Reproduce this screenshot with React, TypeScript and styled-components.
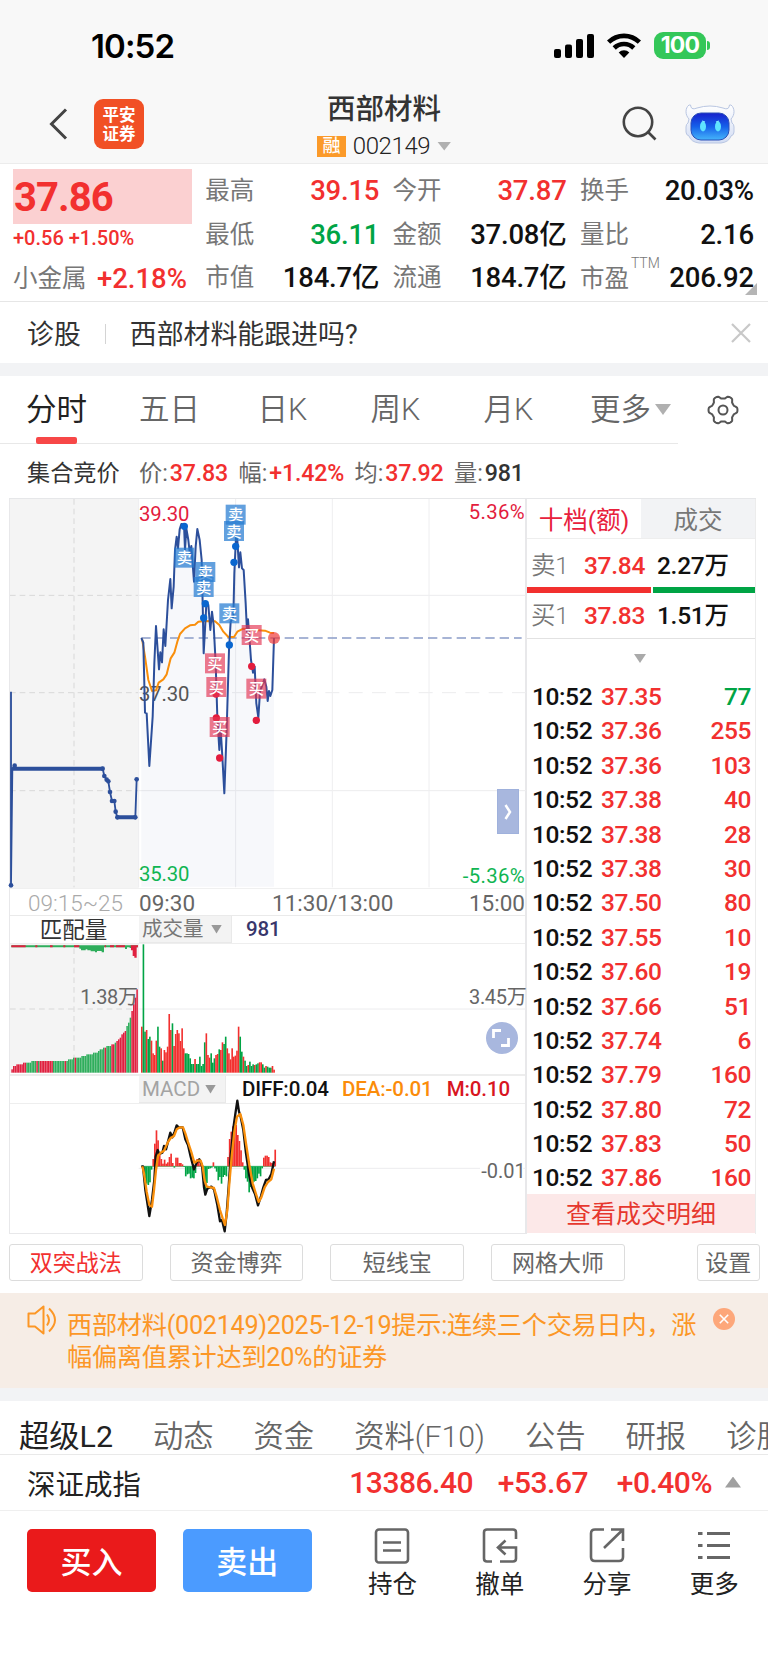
import * as React from 'react';
import styled, { createGlobalStyle } from 'styled-components';

const RED = '#f2302f';
const GREEN = '#00a445';
const INK = '#111';

const GlobalStyle = createGlobalStyle`
  * {
    box-sizing: border-box;
  }
  body {
    margin: 0;
    background: #fff;
    font-family: Roboto, "Noto Sans CJK SC", sans-serif;
    color: ${INK};
  }
`;

const Page = styled.div`
  width: 768px;
  height: 1662px;
  overflow: hidden;
  background: #fff;
`;

const Top = styled.div`
  background: #f8f8f8;
  border-bottom: 1px solid #ececec;
`;

const StatusBar = styled.div`
  height: 91px;
  padding: 0 58px 0 91px;
  display: flex;
  align-items: center;
  justify-content: space-between;
`;

const Clock = styled.div`
  font: 600 33px/40px Inter, sans-serif;
  letter-spacing: -0.9px;
  color: #000;
`;

const StatusIcons = styled.div`
  display: flex;
  align-items: center;
  gap: 13px;
`;

const Battery = styled.div`
  width: 52px;
  height: 27px;
  border-radius: 9px;
  background: #34c759;
  color: #fff;
  font: 700 23px/27px Inter, sans-serif;
  letter-spacing: -0.8px;
  text-align: center;
`;

const BatteryWrap = styled.div`
  display: flex;
  align-items: center;
  gap: 1px;
  &::after {
    content: '';
    width: 3px;
    height: 9px;
    border-radius: 0 3px 3px 0;
    background: #34c759;
  }
`;

const NavBar = styled.header`
  height: 72px;
  padding: 0 33px 6px 48px;
  display: grid;
  grid-template-columns: 96px 1fr 114px;
  align-items: center;
`;

const NavLeft = styled.div`
  display: flex;
  align-items: center;
  justify-content: space-between;
  margin-bottom: 8px;
`;

const NavRight = styled(NavLeft)``;

const Logo = styled.div`
  width: 50px;
  height: 50px;
  border-radius: 9px;
  background: #f15025;
  color: #fff;
  font-size: 16.5px;
  line-height: 19px;
  font-weight: 700;
  text-align: center;
  padding: 7px 6px 0;
`;

const Title = styled.h1`
  margin: 0;
  font-size: 28.5px;
  line-height: 36px;
  font-weight: 500;
  color: #333;
`;

const TitleBox = styled.div`
  display: flex;
  flex-direction: column;
  align-items: center;
  margin-top: 1px;
  padding-left: 3px;
`;

const CodeRow = styled.div`
  display: flex;
  align-items: center;
  height: 36px;
  gap: 7px;
  font-size: 24px;
  font-weight: 300;
  letter-spacing: -0.4px;
  color: #222;
`;

const Badge = styled.span`
  width: 29px;
  height: 21px;
  background: #fb9a2a;
  color: #fff;
  font-size: 18px;
  line-height: 20px;
  font-weight: 500;
  text-align: center;
`;

const Caret = styled.i<{ w?: number; h?: number; up?: boolean; tone?: string }>`
  display: inline-block;
  width: ${p => p.w || 14}px;
  height: ${p => p.h || 9}px;
  background: ${p => p.tone || '#b0b0b0'};
  clip-path: ${p => (p.up ? 'polygon(50% 0, 100% 100%, 0 100%)' : 'polygon(0 0, 100% 0, 50% 100%)')};
`;

const IndexCaret = styled(Caret)`
  margin-left: 13px;
`;

const Quote = styled.section`
  position: relative;
  height: 138px;
  padding: 5px 14px 0 13px;
  display: grid;
  grid-template-columns: 179px 174px 174px 174px;
  column-gap: 13.3px;
  border-bottom: 1px solid #e6e6e6;
`;

const PriceBox = styled.div`
  height: 55px;
  background: #fbd0d1;
  color: ${RED};
  font-size: 40px;
  font-weight: 700;
  line-height: 58px;
  padding-left: 1px;
  letter-spacing: -0.9px;
`;

const Change = styled.div`
  color: ${RED};
  height: 30px;
  line-height: 29px;
  font-size: 20px;
  font-weight: 500;
  letter-spacing: 0;
`;

const Sector = styled.div`
  height: 48px;
  line-height: 50px;
  display: flex;
  justify-content: space-between;
  padding-right: 5px;
  font-size: 24.5px;
  color: #777;
  b {
    font-size: 27.5px;
    font-weight: 500;
    color: ${RED};
  }
`;

const StatRow = styled.div`
  display: flex;
  justify-content: space-between;
  height: 43.5px;
  line-height: 44px;
  font-size: 24.5px;
  color: #777;
`;

const StatValue = styled.span<{ tone?: string }>`
  font-size: 27.5px;
  font-weight: 500;
  letter-spacing: -0.2px;
  color: ${p => p.tone || INK};
`;

const Sup = styled.sup`
  font-size: 14px;
  line-height: 14px;
  vertical-align: 19px;
  font-weight: 300;
  margin-left: 2px;
`;

const Corner = styled.i`
  position: absolute;
  right: 11px;
  bottom: 6px;
  width: 12px;
  height: 12px;
  background: #b5b5b5;
  clip-path: polygon(100% 0, 100% 100%, 0 100%);
`;

const AskRow = styled.div`
  height: 61px;
  display: flex;
  align-items: center;
  padding: 0 17px 0 27px;
  font-size: 26.9px;
  color: #333;
`;

const AskDivider = styled.i`
  width: 1px;
  height: 20px;
  margin: 3px 24px 0 24px;
  background: #d4d4d4;
`;

const Band = styled.div`
  height: 13px;
  background: #f2f3f5;
`;

const PeriodBar = styled.nav`
  display: flex;
  height: 68px;
`;

const Periods = styled.div`
  display: flex;
  width: 678px;
  border-bottom: 1px solid #e8e8e8;
`;

const Period = styled.div<{ active?: boolean }>`
  position: relative;
  width: 113px;
  height: 67px;
  line-height: 67px;
  text-align: center;
  font-size: 30.5px;
  font-weight: ${p => (p.active ? 400 : 350)};
  color: ${p => (p.active ? '#222' : '#666')};
  &::after {
    content: '';
    display: ${p => (p.active ? 'block' : 'none')};
    position: absolute;
    left: 36px;
    bottom: -1px;
    width: 41px;
    height: 7px;
    border-radius: 2px;
    background: #f74747;
  }
`;

const MorePeriod = styled(Period)`
  white-space: nowrap;
  display: flex;
  align-items: center;
  justify-content: flex-end;
  gap: 4px;
  padding-right: 7px;
`;

const GearCell = styled.div`
  flex: 1;
  display: flex;
  align-items: center;
  justify-content: center;
`;

const InfoRow = styled.div`
  height: 54px;
  display: flex;
  align-items: center;
  padding-left: 27px;
  font-size: 23.2px;
  color: #666;
`;

const InfoTitle = styled.span`
  width: 112px;
  color: #333;
`;

const InfoItem = styled.span<{ tone?: string }>`
  margin-right: 10.5px;
  b {
    margin-left: 2px;
    font-weight: 500;
    letter-spacing: -0.2px;
    color: ${p => p.tone || RED};
  }
`;

const Market = styled.main`
  display: flex;
  margin: 0 12px 0 9px;
  height: 736px;
  border-top: 1px solid #e6e7e9;
`;

const Charts = styled.div`
  position: relative;
  width: 518px;
  border: solid #e8e8ea;
  border-width: 0 2px 1px 1px;
  svg {
    display: block;
    margin-left: -1px;
    overflow: visible;
  }
`;

const TimeAxis = styled.div`
  display: flex;
  align-items: center;
  height: 28px;
  padding-top: 1px;
  border-bottom: 1px solid #eaeaea;
  border-top: 1px solid #f0f0f0;
  font-size: 22.5px;
  color: #666;
  letter-spacing: 0;
  span:nth-child(1) {
    width: 129px;
    padding-left: 18px;
    color: #aaa;
    font-weight: 300;
  }
  span:nth-child(2) {
    width: 133px;
  }
  span:nth-child(3) {
    flex: 1;
  }
`;

const PaneHead = styled.div`
  display: flex;
  height: 28px;
  line-height: 27px;
  border-bottom: 1px solid #eee;
  font-size: 20.5px;
  font-weight: 500;
`;

const PaneName = styled.div`
  width: 129px;
  text-align: center;
  padding-right: 2px;
  font-size: 22.5px;
  line-height: 29px;
  font-weight: 400;
  color: #333;
`;

const Indicator = styled.div<{ w: number; tone: string }>`
  width: ${p => p.w}px;
  height: 27px;
  padding: 0 9px 0 3px;
  display: flex;
  align-items: center;
  justify-content: space-between;
  background: #f3f3f3;
  border: solid #e9e9e9;
  border-width: 0 1px 1px 0;
  font-weight: 400;
  color: ${p => p.tone};
`;

const Reading = styled.span<{ tone: string; gap: number }>`
  margin-left: ${p => p.gap}px;
  letter-spacing: -0.1px;
  color: ${p => p.tone};
`;

const PaneGap = styled.div`
  height: 2px;
  background: #ededed;
`;

const Expand = styled.button`
  position: absolute;
  right: 6px;
  top: 290px;
  width: 22px;
  height: 45px;
  border: 1px solid #9fb1dc;
  padding: 0 0 0 7px;
  background: #a8b7de;
`;

const Fullscreen = styled.button`
  position: absolute;
  right: 7px;
  top: 523px;
  width: 32px;
  height: 32px;
  border: 0;
  border-radius: 50%;
  padding: 7px;
  background: #a8b7de;
`;

const Book = styled.aside`
  flex: 1;
  border-right: 1px solid #ececec;
`;

const BookTabs = styled.div`
  display: flex;
  height: 40px;
  border-bottom: 1px solid #eee;
`;

const BookTab = styled.div<{ active?: boolean }>`
  flex: 1;
  text-align: center;
  font-size: 24.5px;
  line-height: 44px;
  color: ${p => (p.active ? '#e8213c' : '#777')};
  background: ${p => (p.active ? '#fff' : '#f2f3f5')};
`;

const Level = styled.div<{ lh: number }>`
  display: flex;
  height: 48px;
  line-height: ${p => p.lh}px;
  padding-left: 4px;
  font-size: 24.5px;
  font-weight: 500;
  letter-spacing: -0.3px;
  color: #777;
  span:nth-child(1) {
    width: 53px;
    font-weight: 350;
  }
  span:nth-child(2) {
    width: 73px;
    color: ${RED};
  }
  span:nth-child(3) {
    color: ${INK};
  }
`;

const Ratio = styled.div`
  display: flex;
  gap: 2px;
  height: 6px;
`;

const RatioPart = styled.i<{ tone: string }>`
  height: 6px;
  background: ${p => p.tone};
`;

const BookMore = styled.div`
  height: 42px;
  border-top: 1px solid #e2e2e2;
  padding-left: 107px;
  line-height: 37px;
  margin-top: -3px;
`;

const Tick = styled.div`
  display: flex;
  height: 34.4px;
  line-height: 34.4px;
  padding: 0 4px 0 5px;
  font-size: 24.5px;
  font-weight: 500;
  letter-spacing: -0.4px;
  span:nth-child(1) {
    width: 69px;
  }
  span:nth-child(2) {
    flex: 1;
    color: ${RED};
  }
`;

const TickVolume = styled.span<{ down?: boolean }>`
  color: ${p => (p.down ? GREEN : RED)};
`;

const Detail = styled.div`
  height: 39px;
  margin-top: -2px;
  line-height: 42px;
  text-align: center;
  font-size: 25px;
  color: #e6382f;
  background: #fce8e8;
`;

const Tools = styled.div`
  display: flex;
  height: 59px;
  padding: 10px 8.5px 0 9px;
  gap: 27px;
`;

const Tool = styled.div<{ active?: boolean; small?: boolean }>`
  width: ${p => (p.small ? 62.5 : 133.7)}px;
  height: 37px;
  margin-left: ${p => (p.small ? 'auto' : 0)};
  border: 1px solid #dcdcdc;
  border-radius: 3px;
  text-align: center;
  font-size: 23px;
  line-height: 37px;
  color: ${p => (p.active ? RED : '#666')};
`;

const Notice = styled.div`
  display: flex;
  height: 95px;
  padding: 12px 33px 0 27px;
  background: #f6ede6;
  color: #fc9726;
  font-size: 25.2px;
  line-height: 31.5px;
  svg {
    flex: none;
  }
`;

const NoticeText = styled.p`
  flex: 1;
  margin: 5px 0 0 10px;
  white-space: nowrap;
  letter-spacing: -0.27px;
`;

const NoticeClose = styled.svg`
  margin-top: 3px;
`;

const NewsTabs = styled.nav`
  display: flex;
  gap: 40px;
  height: 54px;
  padding-left: 19px;
  border-bottom: 1px solid #e9e9e9;
  white-space: nowrap;
  overflow: hidden;
`;

const NewsTab = styled.span<{ active?: boolean }>`
  font-size: 30.3px;
  line-height: 72px;
  height: 53px;
  font-weight: ${p => (p.active ? 400 : 350)};
  color: ${p => (p.active ? '#222' : '#666')};
`;

const IndexRow = styled.div`
  display: flex;
  align-items: center;
  height: 56px;
  padding: 0 27px 1px 27px;
  border-bottom: 1px solid #efefef;
  font-size: 28.5px;
  color: #222;
`;

const IndexValue = styled.span<{ w: number }>`
  width: ${p => p.w}px;
  text-align: right;
  font-size: 30px;
  font-weight: 500;
  letter-spacing: -0.5px;
  color: ${RED};
`;

const Spacer = styled.div`
  flex: 1;
`;

const BottomBar = styled.footer`
  display: flex;
  padding: 18px 0 0 27px;
`;

const Trade = styled.button<{ tone: string }>`
  width: 129px;
  height: 63px;
  margin-right: 27px;
  border: 0;
  border-radius: 5px;
  background: ${p => p.tone};
  color: #fff;
  font: 500 31px/67px Roboto, 'Noto Sans CJK SC', sans-serif;
  padding: 0;
`;

const Action = styled.div`
  width: 107.4px;
  display: flex;
  flex-direction: column;
  align-items: center;
  font-size: 24.5px;
  line-height: 36px;
  color: #222;
  svg {
    display: block;
    margin: -2px 0 2px;
  }
`;

type Stat = [string, string, string?];

const stats: Stat[][] = [
  [['最高', '39.15', RED], ['最低', '36.11', GREEN], ['市值', '184.7亿']],
  [['今开', '37.87', RED], ['金额', '37.08亿'], ['流通', '184.7亿']],
  [['换手', '20.03%'], ['量比', '2.16'], ['市盈', '206.92']]
];

const ticks: [string, number][] = [
  ['37.35', -77],
  ['37.36', 255],
  ['37.36', 103],
  ['37.38', 40],
  ['37.38', 28],
  ['37.38', 30],
  ['37.50', 80],
  ['37.55', 10],
  ['37.60', 19],
  ['37.66', 51],
  ['37.74', 6],
  ['37.79', 160],
  ['37.80', 72],
  ['37.83', 50],
  ['37.86', 160]
];

// chart geometry is kept in 3x units
const priceLine =
  '424,444 430,458 432,540 435,668 440,670 448,828 458,680 463,520 468,408 477,538 481,487 486,517 491,418 496,468 504,330 511,267 515,355 521,290 525,180 530,140 534,175 539,118 544,102 552,104 555,180 559,115 565,150 570,195 574,168 582,275 587,170 592,117 599,150 605,210 608,340 611,490 616,400 619,342 625,345 631,420 636,365 641,405 647,520 652,680 658,780 661,700 667,800 673,910 680,720 687,480 692,395 700,380 703,250 708,140 712,150 717,232 721,187 726,235 731,240 737,340 741,425 744,388 748,440 753,510 759,548 764,530 769,640 775,683 780,605 793,568 799,590 803,633 807,603 811,618 817,600 822,444';

const averageLine =
  '426,446 435,500 445,570 456,603 468,601 476,578 490,568 500,553 512,505 523,488 532,455 540,432 555,415 570,406 585,404 595,395 615,393 645,394 658,405 670,425 685,441 702,441 712,425 730,416 760,420 795,422 810,428 822,429';

const sellTags = [[707, 74], [702, 123], [553, 203], [616, 246], [611, 291], [688, 370]];
const buyTags = [[645, 520], [649, 591], [659, 711], [755, 435], [769, 596]];
const sellDots = [[553, 109], [707, 169], [702, 217], [616, 341], [611, 384], [688, 465]];
const buyDots = [[648, 612], [649, 684], [659, 804], [755, 529], [769, 691]];
const auctionDots = [
  [33, 1186], [44, 827], [308, 836], [313, 858], [320, 869], [325, 874], [330, 906],
  [336, 933], [343, 933], [347, 965], [352, 982], [406, 982], [410, 868]
];

// one bar per minute, negative = falling
const minuteVolume = [
  138, -385, -123, 128, -101, -108, 96, 58, 53, 96, -138, -78, 73, -36, 68, 61, 78, 176, 128, -148,
  80, 116, 128, 118, 95, 133, 73, -58, -58, -56, -43, -26, -26, 41, -26, -26, -48, -20, -26, -91,
  118, 53, 45, -58, -30, -43, 53, 56, -70, 68, 91, -86, -108, 73, 58, 40, 73, 48, 51, 66,
  138, -108, -63, 48, -36, -20, 23, -33, -20, -25, 23, -25, -28, 31, 31, -25, -15, 20, -18, -15,
  -15, 20, 9
];

const macdBars = [
  -2, -12, -36, -52, -56, -48, -10, 22, 68, 108, 78, 42, 22, 8, 20, 8, 12, 28, 38, 10,
  -4, 26, 26, 10, 10, 6, -2, -30, -24, -22, -36, -34, -36, -20, 22, 14, 6, -2, -30, -72,
  -50, -8, -6, -4, 12, -6, -16, -42, -32, -52, -32, -26, -30, 28, 82, 104, 120, 118, 124, 94,
  76, 48, 12, -10, -36, -46, -78, -62, -50, -46, -44, -36, -22, -30, -6, 26, 32, 32, 28, 12,
  10, 12, 50
];

const matchShape: [number, number][] = [
  [34, 8], [40, 20], [60, 26], [80, 31], [120, 36], [200, 37], [210, 42], [235, 44],
  [260, 54], [290, 60], [300, 70], [345, 88], [375, 128], [390, 168], [396, 190], [404, 225], [413, 268]
];

const matchRed = [[34, 77], [108, 110], [120, 157], [192, 194], [222, 226], [314, 318], [332, 342], [348, 375], [392, 414]];

function matchHeight(x: number) {
  for (let i = 1; i < matchShape.length; i++) {
    const [x0, h0] = matchShape[i - 1];
    const [x1, h1] = matchShape[i];
    if (x <= x1) {
      return h0 + ((x - x0) / (x1 - x0)) * (h1 - h0);
    }
  }
  return 268;
}

function Grid({ ys, dashY }: { ys: number[]; dashY?: number }) {
  return (
    <g stroke="#ececee" strokeWidth="3">
      {ys.map(y => (
        <line key={y} x1="416" x2="1578" y1={y} y2={y} />
      ))}
      {dashY && (
        <line x1="416" x2="1578" y1={dashY} y2={dashY} strokeDasharray="42 28" />
      )}
    </g>
  );
}

function Tags({ points, text, color }: { points: number[][]; text: string; color: string }) {
  return (
    <g>
      {points.map(([x, y]) => (
        <g key={`${x}-${y}`}>
          <rect x={x - 30} y={y - 30} width="60" height="60" fill={color} />
          <text x={x} y={y + 17} fontSize="46" fontWeight="500" fill="#fff" textAnchor="middle">
            {text}
          </text>
        </g>
      ))}
    </g>
  );
}

function Dots({ points, color, r }: { points: number[][]; color: string; r: number }) {
  return (
    <g fill={color}>
      {points.map(([x, y]) => (
        <circle key={`${x}-${y}`} cx={x} cy={y} r={r} />
      ))}
    </g>
  );
}

function PriceChart() {
  return (
    <svg width="518" height="389" viewBox="27 27 1554 1167">
      <rect x="30" y="27" width="386" height="1167" fill="#f4f4f4" />
      <g stroke="#d8d8d8" strokeWidth="3" strokeDasharray="17 12">
        <line x1="222" x2="222" y1="27" y2="1192" />
        <line x1="30" x2="416" y1="316" y2="316" />
        <line x1="30" x2="416" y1="608" y2="608" />
        <line x1="30" x2="416" y1="902" y2="902" />
      </g>
      <Grid ys={[316, 902]} dashY={608} />
      <g stroke="#eeeef0" strokeWidth="3">
        <line x1="416" x2="416" y1="27" y2="1192" />
        <line x1="707" x2="707" y1="27" y2="1192" />
        <line x1="997" x2="997" y1="27" y2="1192" />
        <line x1="1287" x2="1287" y1="27" y2="1192" />
      </g>
      <polygon points={`424,1190 ${priceLine} 822,1190`} fill="#4c6cb4" fillOpacity="0.048" />
      <line x1="424" x2="1565" y1="444" y2="444" stroke="#8b9cc8" strokeWidth="5" strokeDasharray="28 15" />
      <g fontSize="61" letterSpacing="-0.5">
        <text x="417" y="94" fill="#e31c3d">39.30</text>
        <text x="417" y="633" fill="#555">37.30</text>
        <text x="417" y="1173" fill="#10b552">35.30</text>
        <text x="1575" y="88" fill="#e31c3d" textAnchor="end" letterSpacing="1">5.36%</text>
        <text x="1575" y="1179" fill="#10b552" textAnchor="end" letterSpacing="1">-5.36%</text>
      </g>
      <g fill="none" stroke="#2c4f9b" strokeLinejoin="round">
        <polyline
          points="33,605 33,1186 37,836 44,827 48,836 308,836 313,858 320,869 325,874 330,906 336,933 343,933 347,965 352,982 406,982 410,868"
          strokeWidth="5.500"
        />
        <path d="M38 836H310M350 982H408" strokeWidth="12" />
        <polyline points={averageLine} stroke="#f98f0c" strokeWidth="6" />
        <polyline points={priceLine} strokeWidth="6" />
      </g>
      <Dots points={auctionDots} color="#2c4f9b" r={7} />
      <Dots points={buyDots} color="#e31c3d" r={11} />
      <Dots points={sellDots} color="#0a66cf" r={11} />
      <Tags points={sellTags} text="卖" color="rgba(38,124,209,.72)" />
      <Tags points={buyTags} text="买" color="rgba(228,52,82,.66)" />
      <circle cx="822" cy="444" r="18" fill="#f03a3a" fillOpacity="0.7" />
    </svg>
  );
}

function VolumeChart() {
  const match: number[] = [];
  for (let x = 34; x < 413; x += 5) {
    match.push(x);
  }
  return (
    <svg width="518" height="130" viewBox="27 162 1554 390">
      <rect x="30" y="162" width="386" height="387" fill="#f4f4f4" />
      <g stroke="#d8d8d8" strokeWidth="3" strokeDasharray="17 12">
        <line x1="222" x2="222" y1="175" y2="548" />
        <line x1="30" x2="416" y1="357" y2="357" />
      </g>
      <line x1="416" x2="416" y1="162" y2="548" stroke="#eee" strokeWidth="3" />
      <Grid ys={[357]} />
      {match.map(x => {
        const h = Math.round(matchHeight(x) / 5) * 5;
        const red = matchRed.some(([a, b]) => x >= a - 2 && x <= b);
        return <rect key={x} x={x} y={548 - h} width="4.6" height={h} fill={red ? '#e0203f' : '#2fae5c'} />;
      })}
      <text x="241" y="342" fontSize="60" letterSpacing="-1" fill="#666">1.38万</text>
      <text x="1579" y="342" fontSize="60" letterSpacing="-1" fill="#666" textAnchor="end">3.45万</text>
      <path d="M34 169H414" stroke="#2fae5c" strokeWidth="6" />
      <path
        d="M34 169H77M106 169H112M150 169H158M190 169H196M222 169H238M314 169H318M330 169H342M348 169H375M392 169H414"
        stroke="#e0203f"
        strokeWidth="6"
      />
      <path d="M238 170V176H243V181H257V178H262V181H272V184H285V187H291V183H305V187H312V170Z" fill="#2fae5c" />
      <path d="M375 170V177H381V170ZM389 170V174H394V170Z" fill="#2fae5c" />
      <path d="M393 170V181H398V198H403V203H410V170Z" fill="#e0203f" />
      {minuteVolume.map((v, i) => (
        <rect
          key={i}
          x={423 + i * 4.84}
          y={548 - Math.abs(v)}
          width="4.84"
          height={Math.abs(v)}
          fill={v > 0 ? RED : GREEN}
        />
      ))}
    </svg>
  );
}

function MacdChart() {
  return (
    <svg width="518" height="128" viewBox="27 642 1554 384">
      <Grid ys={[835]} />
      <path d="M424 829H826" stroke="#00a445" strokeWidth="2" />
      {macdBars.map((v, i) => (
        <rect
          key={i}
          x={423 + i * 4.88}
          y={v > 0 ? 829 - v : 829}
          width="5"
          height={Math.abs(v)}
          fill={v > 0 ? RED : GREEN}
        />
      ))}
      <rect x="1440" y="820" width="130" height="30" fill="#fff" />
      <text x="1577" y="864" fontSize="60" fill="#666" textAnchor="end">-0.01</text>
      <g fill="none" strokeWidth="7" strokeLinejoin="round">
        <polyline
          stroke="#111"
          points="424,829 429,829 436,900 443,945 448,978 456,930 463,870 467,800 473,780 478,792 487,788 492,768 498,778 511,728 517,742 524,725 530,706 536,712 548,712 556,748 564,765 572,800 582,838 590,818 598,808 606,826 612,892 616,914 622,896 634,890 642,898 652,945 660,994 666,990 674,1024 680,970 686,890 692,800 700,715 707,665 712,632 717,665 722,680 730,720 738,790 748,858 756,892 765,912 774,946 783,918 790,892 798,870 806,868 814,852 822,814"
        />
        <polyline
          stroke="#f98f0c"
          points="427,829 432,850 440,905 448,945 456,950 462,900 468,840 474,798 482,788 492,782 504,756 512,744 522,738 530,718 540,712 549,712 556,730 564,756 574,786 583,818 592,812 602,812 608,830 614,872 620,890 632,892 642,894 650,920 660,960 668,985 675,1005 682,960 688,880 695,800 703,725 711,680 721,672 730,705 738,760 748,825 758,880 768,912 776,936 784,922 794,892 804,876 814,868 822,836"
        />
      </g>
    </svg>
  );
}

function SignalIcon() {
  return (
    <svg width="40" height="24" viewBox="0 0 40 24" fill="#000">
      <rect x="0" y="15" width="7" height="9" rx="2" />
      <rect x="11" y="10.500" width="7" height="13.500" rx="2" />
      <rect x="22" y="5" width="7" height="19" rx="2" />
      <rect x="33" y="0" width="7" height="24" rx="2" />
    </svg>
  );
}

function WifiIcon() {
  return (
    <svg width="34" height="25" viewBox="0 0 34 25">
      <g fill="none" stroke="#000" strokeWidth="4.600">
        <path d="M1.600 9.200a22 22 0 0 1 30.800 0" />
        <path d="M7.200 15a14 14 0 0 1 19.600 0" />
      </g>
      <path d="M17 25l-5.300-5.500a7.500 7.500 0 0 1 10.600 0z" />
    </svg>
  );
}

function RobotIcon() {
  return (
    <svg width="50" height="40" viewBox="0 0 50 40">
      <defs>
        <linearGradient id="face" x1="0" y1="0" x2="0" y2="1">
          <stop offset="0" stopColor="#1720cc" />
          <stop offset="0.500" stopColor="#1560ea" />
          <stop offset="1" stopColor="#45b5fa" />
        </linearGradient>
        <linearGradient id="shell" x1="0" y1="0" x2="0" y2="1">
          <stop offset="0" stopColor="#fff" />
          <stop offset="1" stopColor="#d3ddf4" />
        </linearGradient>
      </defs>
      <path
        d="M4 1C0 4 0 11 4 15L3 19Q1 20 1 23V28Q1 31 4 32Q6 38 14 39H36Q44 38 46 32Q49 31 49 28V23Q49 20 47 19L46 15C50 11 50 4 46 1Q44 0 44 3Q43 6 38 4Q25 0 12 4Q7 6 6 3Q6 0 4 1Z"
        fill="url(#shell)"
        stroke="#b9c6e2"
        strokeWidth="1"
      />
      <rect x="6" y="9" width="38" height="27" rx="10" fill="url(#face)" stroke="#2a4fb8" strokeWidth="1" />
      <g fill="#5fe3ff">
        <ellipse cx="18" cy="22.500" rx="3" ry="5" />
        <ellipse cx="33" cy="22.500" rx="3" ry="5" />
      </g>
      <path d="M17 17l3 1M34 17l-3 1" stroke="#7fe9ff" strokeWidth="1.300" />
    </svg>
  );
}

// six-tooth gear outline
const gearPoints = Array.from({ length: 72 }, (_, i) => {
  const a = (i * Math.PI) / 36;
  const r = 13 + 1.5 * Math.tanh(2.2 * Math.cos(6 * a));
  return `${(16 + r * Math.cos(a)).toFixed(2)},${(16 + r * Math.sin(a)).toFixed(2)}`;
}).join(' ');

function GearIcon() {
  return (
    <svg width="32" height="32" viewBox="0 0 32 32" fill="none" stroke="#555" strokeWidth="2" strokeLinejoin="round">
      <polygon points={gearPoints} />
      <circle cx="16" cy="16" r="4.500" />
    </svg>
  );
}

function App() {
  return (
    <Page>
      <GlobalStyle />
      <Top>
        <StatusBar>
          <Clock>10:52</Clock>
          <StatusIcons>
            <SignalIcon />
            <WifiIcon />
            <BatteryWrap>
              <Battery>100</Battery>
            </BatteryWrap>
          </StatusIcons>
        </StatusBar>
        <NavBar>
          <NavLeft>
            <svg width="20" height="32" viewBox="0 0 20 32" fill="none" stroke="#444" strokeWidth="3">
              <path d="M18 1.500L3.500 16L18 30.500" />
            </svg>
            <Logo>平安证券</Logo>
          </NavLeft>
          <TitleBox>
            <Title>西部材料</Title>
            <CodeRow>
              <Badge>融</Badge>
              002149
              <Caret />
            </CodeRow>
          </TitleBox>
          <NavRight>
            <svg width="36" height="36" viewBox="0 0 36 36" fill="none" stroke="#444" strokeWidth="2.600">
              <circle cx="17" cy="16" r="14.200" />
              <path d="M27 26L34.500 33.500" />
            </svg>
            <RobotIcon />
          </NavRight>
        </NavBar>
      </Top>

      <Quote>
        <div>
          <PriceBox>37.86</PriceBox>
          <Change>+0.56 +1.50%</Change>
          <Sector>
            小金属<b>+2.18%</b>
          </Sector>
        </div>
        {stats.map((column, i) => (
          <div key={i}>
            {column.map(([label, value, tone]) => (
              <StatRow key={label}>
                <span>
                  {label}
                  {label === '市盈' && <Sup>TTM</Sup>}
                </span>
                <StatValue tone={tone}>{value}</StatValue>
              </StatRow>
            ))}
          </div>
        ))}
        <Corner />
      </Quote>

      <AskRow>
        诊股
        <AskDivider />
        西部材料能跟进吗?
        <Spacer />
        <svg width="20" height="20" viewBox="0 0 20 20" stroke="#c8c8c8" strokeWidth="2.200">
          <path d="M1 1L19 19M19 1L1 19" />
        </svg>
      </AskRow>
      <Band />

      <PeriodBar>
        <Periods>
          <Period active>分时</Period>
          <Period>五日</Period>
          <Period>日K</Period>
          <Period>周K</Period>
          <Period>月K</Period>
          <MorePeriod>
            更多
            <Caret w={16} h={11} />
          </MorePeriod>
        </Periods>
        <GearCell>
          <GearIcon />
        </GearCell>
      </PeriodBar>

      <InfoRow>
        <InfoTitle>集合竞价</InfoTitle>
        <InfoItem>价:<b>37.83</b></InfoItem>
        <InfoItem>幅:<b>+1.42%</b></InfoItem>
        <InfoItem>均:<b>37.92</b></InfoItem>
        <InfoItem tone="#333">量:<b>981</b></InfoItem>
      </InfoRow>

      <Market>
        <Charts>
          <PriceChart />
          <TimeAxis>
            <span>09:15~25</span>
            <span>09:30</span>
            <span>11:30/13:00</span>
            <span>15:00</span>
          </TimeAxis>
          <PaneHead>
            <PaneName>匹配量</PaneName>
            <Indicator w={93} tone="#777">
              成交量
              <Caret w={11} tone="#999" />
            </Indicator>
            <Reading gap={14} tone="#38366b">981</Reading>
          </PaneHead>
          <VolumeChart />
          <PaneGap />
          <PaneHead>
            <PaneName />
            <Indicator w={87} tone="#a3a3a3">
              MACD
              <Caret w={11} tone="#999" />
            </Indicator>
            <Reading gap={16} tone="#111">DIFF:0.04</Reading>
            <Reading gap={13} tone="#fb8c0a">DEA:-0.01</Reading>
            <Reading gap={14} tone="#d8161f">M:0.10</Reading>
          </PaneHead>
          <MacdChart />
          <Expand>
            <svg width="8" height="16" viewBox="0 0 8 16" fill="none" stroke="#fff" strokeWidth="2.500">
              <path d="M1.500 1L6 8L1.500 15" />
            </svg>
          </Expand>
          <Fullscreen>
            <svg width="18" height="18" viewBox="0 0 18 18" fill="none" stroke="#fff" strokeWidth="2.800">
              <path d="M1.500 9V1.500H9M9 16.500H16.500V9" />
            </svg>
          </Fullscreen>
        </Charts>
        <Book>
          <BookTabs>
            <BookTab active>十档(额)</BookTab>
            <BookTab>成交</BookTab>
          </BookTabs>
          <Level lh={53}>
            <span>卖1</span>
            <span>37.84</span>
            <span>2.27万</span>
          </Level>
          <Ratio>
            <RatioPart tone={RED} style={{ width: '55%' }} />
            <RatioPart tone={GREEN} style={{ width: '45%' }} />
          </Ratio>
          <Level lh={46}>
            <span>买1</span>
            <span>37.83</span>
            <span>1.51万</span>
          </Level>
          <BookMore>
            <Caret w={12} tone="#aaa" />
          </BookMore>
          {ticks.map(([price, volume], i) => (
            <Tick key={i}>
              <span>10:52</span>
              <span>{price}</span>
              <TickVolume down={volume < 0}>{Math.abs(volume)}</TickVolume>
            </Tick>
          ))}
          <Detail>查看成交明细</Detail>
        </Book>
      </Market>

      <Tools>
        <Tool active>双突战法</Tool>
        <Tool>资金博弈</Tool>
        <Tool>短线宝</Tool>
        <Tool>网格大师</Tool>
        <Tool small>设置</Tool>
      </Tools>

      <Notice>
        <svg width="30" height="30" viewBox="0 0 30 30" fill="none" stroke="#fc9726" strokeWidth="2">
          <path d="M1.500 8.500H8L16.500 1.500V28.500L8 21.500H1.500Z" strokeLinejoin="round" />
          <path d="M20 9.500Q24 15 20 20.500M22 3.500Q34 15 22 26.500" />
        </svg>
        <NoticeText>
          西部材料(002149)2025-12-19提示:连续三个交易日内，涨
          <br />
          幅偏离值累计达到20%的证券
        </NoticeText>
        <NoticeClose width="22" height="22" viewBox="0 0 22 22">
          <circle cx="11" cy="11" r="11" fill="#fda77a" />
          <path d="M6.800 6.800L15.200 15.200M15.200 6.800L6.800 15.200" stroke="#fff" strokeWidth="1.600" />
        </NoticeClose>
      </Notice>
      <Band />

      <NewsTabs>
        <NewsTab active>超级L2</NewsTab>
        <NewsTab>动态</NewsTab>
        <NewsTab>资金</NewsTab>
        <NewsTab>资料(F10)</NewsTab>
        <NewsTab>公告</NewsTab>
        <NewsTab>研报</NewsTab>
        <NewsTab>诊股</NewsTab>
      </NewsTabs>

      <IndexRow>
        深证成指
        <Spacer />
        <IndexValue w={140}>13386.40</IndexValue>
        <IndexValue w={115}>+53.67</IndexValue>
        <IndexValue w={124}>+0.40%</IndexValue>
        <IndexCaret w={16} h={11} up tone="#a0a0a0" />
      </IndexRow>

      <BottomBar>
        <Trade tone="#ea1a1b">买入</Trade>
        <Trade tone="#4b9bff">卖出</Trade>
        <Action>
          <svg width="36" height="38" viewBox="0 0 36 38" fill="none" stroke="#666" strokeWidth="2.600">
            <rect x="2" y="2.500" width="32" height="33" rx="3" />
            <path d="M9 15.500H27M9 23.500H27" />
          </svg>
          持仓
        </Action>
        <Action>
          <svg width="36" height="38" viewBox="0 0 36 38" fill="none" stroke="#666" strokeWidth="2.600">
            <path d="M34 12V5.500Q34 2.500 31 2.500H5Q2 2.500 2 5.500V31.500Q2 34.500 5 34.500H10" />
            <path d="M18 34.500H31Q34 34.500 34 31.500V20.500H16M23.500 13.500L16 20.500L23.500 27.500" />
          </svg>
          撤单
        </Action>
        <Action>
          <svg width="36" height="38" viewBox="0 0 36 38" fill="none" stroke="#666" strokeWidth="2.600">
            <path d="M15 2.500H6Q2 2.500 2 6.500V30Q2 34 6 34H30Q34 34 34 30V21" />
            <path d="M15 21L33 3.500M22 2.500H34V14" />
          </svg>
          分享
        </Action>
        <Action>
          <svg width="36" height="38" viewBox="0 0 36 38" fill="none" stroke="#666" strokeWidth="3">
            <path d="M2 6.500H6.500M11 6.500H34M2 18.500H6.500M11 18.500H34M2 30.500H6.500M11 30.500H34" />
          </svg>
          更多
        </Action>
      </BottomBar>
    </Page>
  );
}

export default App;
